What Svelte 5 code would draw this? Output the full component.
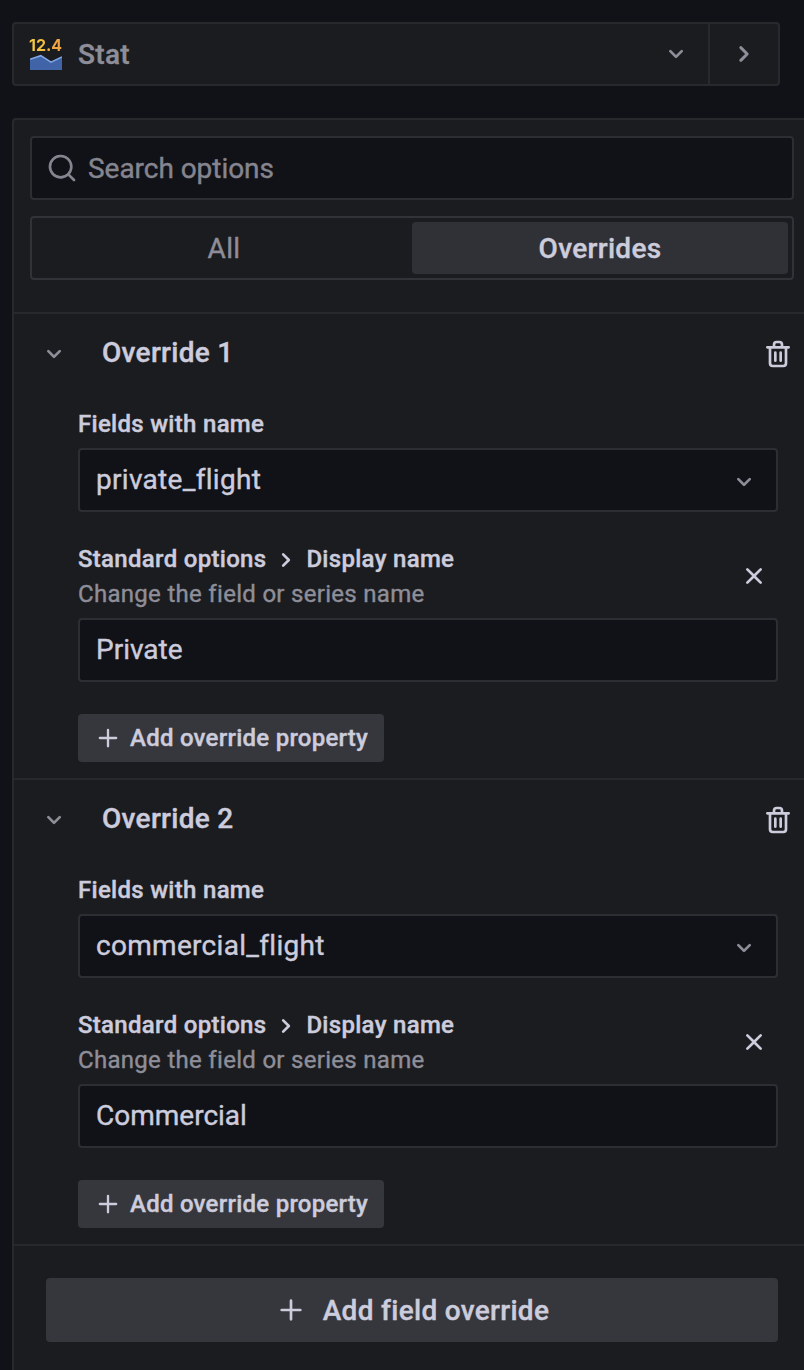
<script>
  const overrides = [
    { title: 'Override 1', field: 'private_flight', name: 'Private' },
    { title: 'Override 2', field: 'commercial_flight', name: 'Commercial' },
  ];

  const icons = {
    down: 'M17,9.17a1,1,0,0,0-1.41,0L12,12.71,8.46,9.17a1,1,0,0,0-1.41,0,1,1,0,0,0,0,1.42l4.24,4.24a1,1,0,0,0,1.42,0L17,10.59A1,1,0,0,0,17,9.17Z',
    right: 'M14.83,11.29,10.59,7.05a1,1,0,0,0-1.42,0,1,1,0,0,0,0,1.41L12.71,12,9.17,15.54a1,1,0,0,0,0,1.41,1,1,0,0,0,.71.29,1,1,0,0,0,.71-.29l4.24-4.24A1,1,0,0,0,14.83,11.29Z',
    search: 'M21.71,20.29,18,16.61A9,9,0,1,0,16.61,18l3.68,3.68a1,1,0,0,0,1.42,0A1,1,0,0,0,21.71,20.29ZM11,18a7,7,0,1,1,7-7A7,7,0,0,1,11,18Z',
    trash: 'M10,18a1,1,0,0,0,1-1V11a1,1,0,0,0-2,0v6A1,1,0,0,0,10,18ZM20,6H16V5a3,3,0,0,0-3-3H11A3,3,0,0,0,8,5V6H4A1,1,0,0,0,4,8H5V19a3,3,0,0,0,3,3h8a3,3,0,0,0,3-3V8h1a1,1,0,0,0,0-2ZM10,5a1,1,0,0,1,1-1h2a1,1,0,0,1,1,1V6H10Zm7,14a1,1,0,0,1-1,1H8a1,1,0,0,1-1-1V8H17Zm-3-1a1,1,0,0,0,1-1V11a1,1,0,0,0-2,0v6A1,1,0,0,0,14,18Z',
    times: 'M13.41,12l4.3-4.29a1,1,0,1,0-1.42-1.42L12,10.59,7.71,6.29A1,1,0,0,0,6.29,7.71L10.59,12l-4.3,4.29a1,1,0,0,0,0,1.42,1,1,0,0,0,1.42,0L12,13.41l4.29,4.3a1,1,0,0,0,1.42,0,1,1,0,0,0,0-1.42Z',
    plus: 'M19,11H13V5a1,1,0,0,0-2,0v6H5a1,1,0,0,0,0,2h6v6a1,1,0,0,0,2,0V13h6a1,1,0,0,0,0-2Z',
  };
</script>

{#snippet icon(name, size = 32)}
  <svg class="icon" width={size} height={size} viewBox="0 0 24 24" fill="currentColor" aria-hidden="true">
    <path d={icons[name]} />
  </svg>
{/snippet}

<div class="page">
  <div class="viz">
    <div class="viz-main">
      <div class="stat">
        <span class="stat-num">12.4</span>
        <svg width="32" height="16" viewBox="0 0 32 16" aria-hidden="true">
          <path d="M0 5.8L10.8 2L21 8.4L32 3.3V16H0Z" fill="#4164a8" />
          <path d="M0 5.4L10.8 1.7L21 8.2L32 3" fill="none" stroke="#80aaea" stroke-width="1.5" />
        </svg>
      </div>
      <span class="viz-name">Stat</span>
      {@render icon('down')}
    </div>
    <div class="viz-toggle">{@render icon('right', 36)}</div>
  </div>

  <div class="panel">
    <div class="head">
      <div class="search">{@render icon('search')}<span>Search options</span></div>
      <div class="tabs">
        <div class="tab">All</div>
        <div class="tab active">Overrides</div>
      </div>
    </div>

    {#each overrides as item}
      <section>
        <header>
          <span class="muted">{@render icon('down')}</span>
          <h2>{item.title}</h2>
          {@render icon('trash')}
        </header>
        <div class="body">
          <div class="label">Fields with name</div>
          <div class="field"><span>{item.field}</span><span class="muted">{@render icon('down')}</span></div>
          <div class="prop">
            <div>
              <div class="crumbs"><span>Standard options</span>{@render icon('right')}<span>Display name</span></div>
              <div class="desc">Change the field or series name</div>
            </div>
            {@render icon('times')}
          </div>
          <div class="field input"><span>{item.name}</span></div>
          <button class="small">{@render icon('plus', 28)}<span>Add override property</span></button>
        </div>
      </section>
    {/each}

    <div class="foot">
      <button class="large">{@render icon('plus')}<span>Add field override</span></button>
    </div>
  </div>
</div>

<style>
  :global(body) {
    background: #111217;
  }
  .page,
  .page * {
    box-sizing: border-box;
  }
  .page {
    height: 1370px;
    padding: 22px 0 0 12px;
    overflow: hidden;
    background: #111217;
    color: #ccccdc;
    font: 400 28px/40px Roboto, sans-serif;
    letter-spacing: 0.3px;
    white-space: nowrap;
    -webkit-text-stroke: 0.4px currentColor;
  }
  .icon {
    display: block;
    flex: none;
  }
  .viz {
    display: flex;
    width: 768px;
    height: 64px;
    border: 2px solid #28292d;
    border-radius: 4px;
    background: #1b1c20;
    color: #8e8e99;
  }
  .viz-main {
    display: flex;
    flex: 1;
    align-items: center;
    padding: 0 16px;
  }
  .stat {
    display: flex;
    flex-direction: column;
    width: 32px;
    height: 36px;
    padding-bottom: 2px;
    justify-content: space-between;
  }
  .stat-num {
    margin-left: -1px;
    width: 36px;
    font: 700 16px/18px Inter, sans-serif;
    letter-spacing: 0;
    color: transparent;
    background: linear-gradient(90deg, #f4d242, #ee9a45);
    background-clip: text;
    -webkit-background-clip: text;
    -webkit-text-stroke: 0;
  }
  .stat svg {
    display: block;
  }
  .viz-name {
    flex: 1;
    margin: 2px 0 0 16px;
    font-weight: 500;
  }
  .viz-toggle {
    display: flex;
    align-items: center;
    justify-content: center;
    width: 70px;
    border-left: 2px solid #28292d;
  }
  .panel {
    width: 796px;
    height: 1260px;
    margin-top: 32px;
    border: 2px solid #28292d;
    border-radius: 4px 0 0 0;
    border-right: 0;
    border-bottom: 0;
    background: #1b1c20;
  }
  .head {
    display: flex;
    flex-direction: column;
    gap: 16px;
    width: 780px;
    height: 192px;
    padding: 16px 0 0 16px;
  }
  .search,
  .field {
    display: flex;
    align-items: center;
    height: 64px;
    border: 2px solid #2d2e33;
    border-radius: 4px;
    background: #111217;
  }
  .search {
    gap: 10px;
    padding-left: 14px;
    color: #85858f;
  }
  .search span {
    margin-top: 1px;
    letter-spacing: -0.04px;
  }
  .tabs {
    display: flex;
    height: 64px;
    padding: 4px;
    border: 2px solid #323338;
    border-radius: 4px;
  }
  .tab {
    display: flex;
    flex: 1;
    align-items: center;
    justify-content: center;
    padding-top: 1px;
    border-radius: 4px;
    color: #8e8e99;
  }
  .active {
    background: #303136;
    color: #ccccdc;
    font-weight: 500;
  }
  section {
    height: 466px;
    border-top: 2px solid #28292d;
  }
  header {
    display: flex;
    align-items: center;
    width: 780px;
    height: 80px;
    padding-left: 24px;
  }
  h2 {
    flex: 1;
    margin: 0 0 2px 32px;
    font: inherit;
    font-weight: 500;
  }
  .muted {
    color: #8e8e99;
  }
  .body {
    width: 764px;
    padding-left: 64px;
  }
  .label {
    height: 54px;
    padding-top: 13px;
    font-size: 24px;
    line-height: 34px;
    font-weight: 500;
  }
  .field {
    justify-content: space-between;
    padding: 0 16px;
  }
  .field .muted {
    margin-top: 4px;
  }
  .input {
    letter-spacing: 0;
  }
  .prop {
    display: flex;
    align-items: flex-start;
    justify-content: space-between;
    height: 106px;
    padding: 30px 8px 0 0;
  }
  .prop > .icon {
    margin-top: 18px;
  }
  .crumbs {
    display: flex;
    align-items: center;
    gap: 4px;
    font-size: 24px;
    line-height: 34px;
    font-weight: 500;
  }
  .crumbs .icon {
    margin-top: 2px;
  }
  .desc {
    margin-top: 1px;
    font-size: 24px;
    line-height: 34px;
    color: #8e8e99;
  }
  button {
    display: flex;
    align-items: center;
    border: 0;
    border-radius: 4px;
    background: #36373c;
    color: inherit;
    font: inherit;
    font-weight: 500;
    letter-spacing: 0.3px;
  }
  .small {
    width: 306px;
    height: 48px;
    margin-top: 32px;
    padding: 0 0 0 16px;
    gap: 8px;
    font-size: 24px;
    letter-spacing: 0.25px;
  }
  .foot {
    padding: 32px;
    border-top: 2px solid #28292d;
  }
  .large {
    justify-content: center;
    width: 732px;
    height: 64px;
    gap: 16px;
    padding: 0;
  }
  .large span {
    margin-top: 1px;
  }
</style>
